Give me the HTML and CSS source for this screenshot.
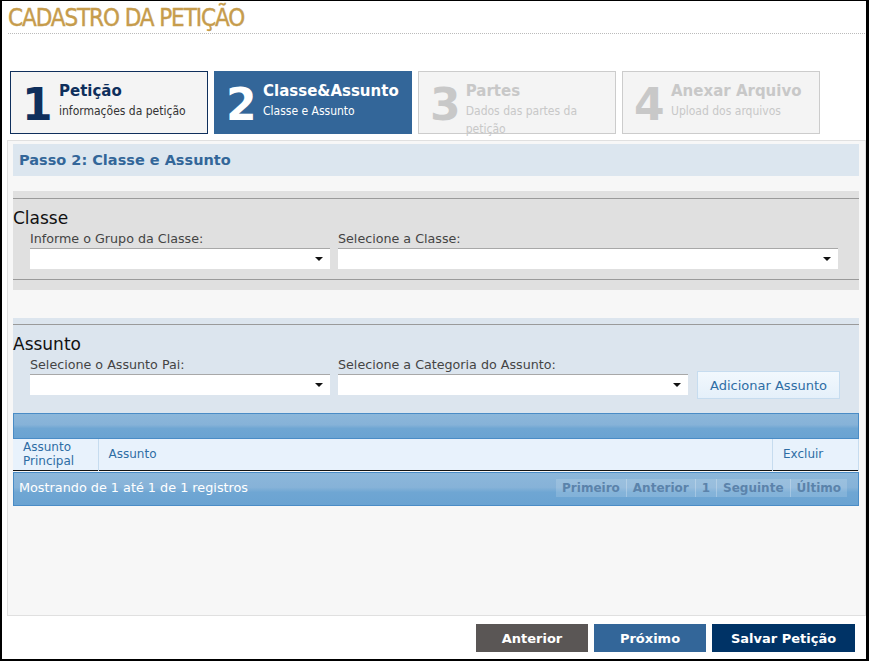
FILE: index.html
```html
<!DOCTYPE html>
<html lang="pt-BR">
<head>
  <meta charset="UTF-8" />
  <title>Cadastro da Petição</title>
  <link rel="stylesheet" href="styles.css">
</head>
<body>
  <div class="frame">

    <!-- Titulo -->
    <h1 class="page-title">CADASTRO DA PETIÇÃO</h1>

    <!-- Passos -->
    <div class="steps">
      <div class="step done">
        <span class="step-num">1</span>
        <div class="step-text">
          <strong>Petição</strong>
          <span>informações da petição</span>
        </div>
      </div>
      <div class="step active">
        <span class="step-num">2</span>
        <div class="step-text">
          <strong>Classe&amp;Assunto</strong>
          <span>Classe e Assunto</span>
        </div>
      </div>
      <div class="step">
        <span class="step-num">3</span>
        <div class="step-text">
          <strong>Partes</strong>
          <span>Dados das partes da petição</span>
        </div>
      </div>
      <div class="step">
        <span class="step-num">4</span>
        <div class="step-text">
          <strong>Anexar Arquivo</strong>
          <span>Upload dos arquivos</span>
        </div>
      </div>
    </div>

    <div class="panel">
      <div class="panel-head">Passo 2: Classe e Assunto</div>

      <!-- Classe -->
      <div class="section section-classe">
        <h2>Classe</h2>
        <div class="fields">
          <div class="field w-grupo">
            <label>Informe o Grupo da Classe:</label>
            <div class="select"></div>
          </div>
          <div class="field w-classe">
            <label>Selecione a Classe:</label>
            <div class="select"></div>
          </div>
        </div>
      </div>

      <!-- Assunto -->
      <div class="section section-assunto">
        <h2>Assunto</h2>
        <div class="fields">
          <div class="field w-grupo">
            <label>Selecione o Assunto Pai:</label>
            <div class="select"></div>
          </div>
          <div class="field w-categoria">
            <label>Selecione a Categoria do Assunto:</label>
            <div class="select"></div>
          </div>
          <button class="btn-add">Adicionar Assunto</button>
        </div>
      </div>

      <div class="grid">
        <div class="grid-top"></div>
        <table>
          <thead>
            <tr>
              <th class="col-principal">Assunto<br>Principal</th>
              <th>Assunto</th>
              <th class="col-excluir">Excluir</th>
            </tr>
          </thead>
        </table>
        <div class="grid-foot">
          <span>Mostrando de 1 até 1 de 1 registros</span>
          <div class="pager">
            <a>Primeiro</a><a>Anterior</a><a>1</a><a>Seguinte</a><a>Último</a>
          </div>
        </div>
      </div>
    </div>

    <div class="actions">
      <button class="btn btn-prev">Anterior</button>
      <button class="btn btn-next">Próximo</button>
      <button class="btn btn-save">Salvar Petição</button>
    </div>
  </div>
</body>
</html>
```

FILE: styles.css
```css
* {
  box-sizing: border-box;
}

body {
  margin: 0;
  font-family: "DejaVu Sans", Verdana, sans-serif;
  background: #000;
}

.frame {
  width: 869px;
  height: 661px;
  background: white;
  border-style: solid;
  border-color: #000;
  border-width: 1px 3px 2px 2px;
  overflow: hidden;
}

.page-title {
  margin: 0 0 0 6px;
  padding: 4px 0 1px 0;
  width: 857px;
  font-family: "DejaVu Sans Condensed", "DejaVu Sans", sans-serif;
  font-size: 24px;
  font-weight: normal;
  color: #c69c4c;
  letter-spacing: -1.1px;
  -webkit-text-stroke: 0.4px #c69c4c;
  border-bottom: 1px dotted #bbb;
  line-height: 27px;
}

/* Passos */
.steps {
  display: flex;
  gap: 6px;
  margin: 37px 0 0 8px;
}

.step {
  width: 198px;
  height: 63px;
  display: flex;
  align-items: flex-start;
  padding: 9px 0 0 11px;
  background: #f4f4f4;
  border: 1px solid #cccccc;
  color: #c8c8c8;
}

.step.done {
  border-color: #0f2f5c;
}

.step.active {
  background: #336699;
  border-color: #336699;
  color: white;
}

.step-num {
  font-size: 44px;
  font-weight: bold;
  line-height: 46px;
  width: 37px;
  margin-top: 1px;
}

.step.done .step-num,
.step.done strong {
  color: #0f2f5c;
}

.step-text strong {
  display: block;
  font-size: 15px;
  line-height: 20px;
}

.step-text span {
  display: block;
  font-family: "DejaVu Sans Condensed", "DejaVu Sans", sans-serif;
  font-size: 12px;
  line-height: 18px;
  margin-top: 1px;
}

.step.done .step-text span {
  color: #333;
}

/* Painel */
.panel {
  margin: 6px 0 0 5px;
  width: 859px;
  height: 476px;
  background: #f7f7f7;
  border: 1px solid #e0e0e0;
  padding: 3px 6px 0 5px;
}

.panel-head {
  background: #dce6ef;
  color: #336699;
  font-weight: bold;
  font-size: 14.5px;
  height: 32px;
  line-height: 32px;
  padding-left: 6px;
}

.section {
  border-bottom: 9px solid transparent;
}

.section h2 {
  margin: 0;
  font-size: 17px;
  font-weight: normal;
  color: #111;
  line-height: 22px;
  padding-top: 8px;
}

.section-classe {
  margin-top: 15px;
  background: #e0e0e0;
  border-top: 7px solid #e0e0e0;
  height: 99px;
}

.section-classe .fields {
  border-bottom: 1px solid #9a9a9a;
  padding-bottom: 10px;
}

.section-classe h2,
.section-assunto h2 {
  border-top: 1px solid #9a9a9a;
}

.section-assunto {
  margin-top: 28px;
  background: #dce5ee;
  border-top: 6px solid #dce5ee;
  height: 95px;
}

.fields {
  display: flex;
  align-items: flex-end;
  padding-left: 17px;
}

.field label {
  display: block;
  font-size: 12.7px;
  color: #444;
  line-height: 16px;
  margin-top: 2px;
  margin-bottom: 1px;
}

.w-grupo {
  width: 300px;
  margin-right: 8px;
}

.w-classe {
  width: 500px;
}

.w-categoria {
  width: 350px;
  margin-right: 9px;
}

.select {
  position: relative;
  height: 21px;
  background: white;
  border-top: 1px solid #a8a8a8;
}

.select::after {
  content: "";
  position: absolute;
  right: 7px;
  top: 8px;
  border-left: 4px solid transparent;
  border-right: 4px solid transparent;
  border-top: 4px solid #111;
}

.btn-add {
  width: 143px;
  height: 28px;
  margin-bottom: -4px;
  font-family: "DejaVu Sans", sans-serif;
  font-size: 13px;
  color: #2e6da4;
  background: linear-gradient(#f2f8fd, #e5f0fa);
  border: 1px solid #c6dcef;
}

/* Grid */
.grid-top,
.grid-foot {
  background: linear-gradient(#8cb7da 0%, #86b2d8 45%, #6fa6d3 60%, #6aa3d2 100%);
  border: 1px solid #4a8cc6;
}

.grid-top {
  height: 26px;
}

table {
  width: 100%;
  border-collapse: collapse;
  border-bottom: 1px solid #111;
}

th {
  background: #e8f2fc;
  color: #2e6da4;
  font-weight: normal;
  font-size: 12px;
  text-align: left;
  height: 31px;
  line-height: 14px;
  padding: 0 10px;
  border-right: 1px solid #c6dcef;
}

th.col-principal {
  width: 85px;
}

th.col-excluir {
  width: 86px;
}

.grid-foot {
  margin-top: 1px;
  height: 34px;
  display: flex;
  align-items: center;
  justify-content: space-between;
  padding: 0 11px 2px 5px;
  color: white;
  font-size: 12.8px;
}

.pager {
  display: flex;
  background: rgba(255, 255, 255, 0.15);
}

.pager a {
  font-weight: bold;
  font-size: 12px;
  color: #5b83ab;
  padding: 2px 6px;
  border-right: 1px solid rgba(255, 255, 255, 0.25);
}

.pager a:last-child {
  border-right: none;
}

/* Botoes */
.actions {
  display: flex;
  justify-content: flex-end;
  gap: 6px;
  margin: 8px 11px 0 0;
}

.btn {
  height: 28px;
  border: none;
  color: white;
  font-family: "DejaVu Sans", sans-serif;
  font-weight: bold;
  font-size: 13px;
}

.btn-prev {
  width: 112px;
  background: #5a5655;
}

.btn-next {
  width: 112px;
  background: #336699;
}

.btn-save {
  width: 143px;
  background: #003366;
}
```
